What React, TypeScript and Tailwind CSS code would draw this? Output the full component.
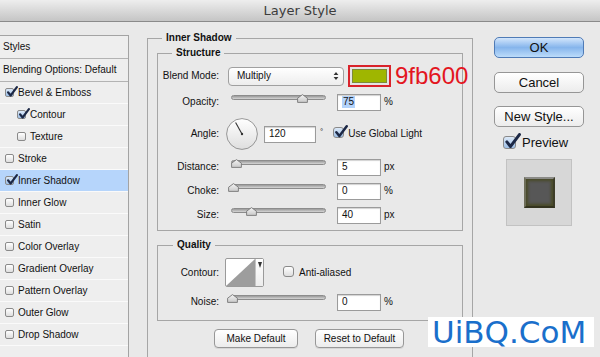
import React from "react";

type CheckSize = "sm" | "md" | "lg";

const boxSize: Record<CheckSize, string> = {
  sm: "w-[9px] h-[9px] rounded-[2px]",
  md: "w-[11px] h-[11px] rounded-[3px]",
  lg: "w-[13px] h-[13px] rounded-[3px]",
};
const markSize: Record<CheckSize, string> = {
  sm: "absolute left-[0px] -top-[3px] w-[12px] h-[12px]",
  md: "absolute left-[0px] -top-[3px] w-[14px] h-[14px]",
  lg: "absolute left-[0px] -top-[4px] w-[17px] h-[17px]",
};

function Check({ checked = false, size = "sm" }: { checked?: boolean; size?: CheckSize }) {
  return (
    <span
      className={`relative inline-block shrink-0 border border-[#8a8a8a] ${boxSize[size]} ${
        checked
          ? "bg-linear-to-b from-[#dce9f8] to-[#9dbfe6]"
          : "bg-linear-to-b from-white to-[#dedede]"
      }`}
    >
      {checked && (
        <svg className={markSize[size]} viewBox="0 0 13 13">
          <path
            d="M2.2 6.8 L5 10.3 L11.8 1.2"
            fill="none"
            stroke="#1c2846"
            strokeWidth="2.3"
            strokeLinecap="round"
            strokeLinejoin="round"
          />
        </svg>
      )}
    </span>
  );
}

function StyleRow({
  label,
  checked = false,
  sub = false,
  selected = false,
}: {
  label: string;
  checked?: boolean;
  sub?: boolean;
  selected?: boolean;
}) {
  return (
    <div
      className={`h-[22px] flex items-center border-b border-[#fafafa] ${sub ? "pl-[17px]" : "pl-[5px]"} ${
        selected ? "bg-[#b6d5fb]" : ""
      }`}
    >
      <Check checked={checked} />
      <span className="ml-[4px]">{label}</span>
    </div>
  );
}

function Slider({ thumb }: { thumb: number }) {
  return (
    <div className="relative w-[95px] h-[20px] shrink-0">
      <div className="absolute left-0 right-0 top-[3px] h-[5px] rounded-full border border-[#8c8c8c] bg-linear-to-b from-[#9a9a9a] to-[#d6d6d6]" />
      <svg className="absolute top-[2px] w-[11px] h-[9px]" style={{ left: thumb }} viewBox="0 0 11 9">
        <defs>
          <linearGradient id="thumbg" x1="0" y1="0" x2="0" y2="1">
            <stop offset="0" stopColor="#f4f4f4" />
            <stop offset="1" stopColor="#c9c9c9" />
          </linearGradient>
        </defs>
        <path d="M5.5 0.6 L10.4 4.2 L10.4 8.4 L0.6 8.4 L0.6 4.2 Z" fill="url(#thumbg)" stroke="#777" strokeWidth="0.9" />
      </svg>
    </div>
  );
}

function Field({ value, wide = false, highlight = false }: { value: string; wide?: boolean; highlight?: boolean }) {
  return (
    <div
      className={`h-[17px] ${wide ? "w-[52px]" : "w-[44px]"} shrink-0 bg-white border border-[#9b9b9b] shadow-[inset_0_1px_1px_rgba(0,0,0,0.18)] flex items-center pl-[4px]`}
    >
      <span className={highlight ? "bg-[#b3d3fb] px-[1px]" : ""}>{value}</span>
    </div>
  );
}

function Label({ children }: { children: React.ReactNode }) {
  return <div className="w-[61px] shrink-0 text-right">{children}</div>;
}

function SmallButton({ children, w }: { children: React.ReactNode; w: string }) {
  return (
    <div
      className={`${w} h-[19px] rounded-[4px] border border-[#979797] bg-linear-to-b from-white to-[#ececec] shadow-[0_1px_0_rgba(0,0,0,0.08)] flex items-center justify-center`}
    >
      {children}
    </div>
  );
}

function BigButton({ children, primary = false }: { children: React.ReactNode; primary?: boolean }) {
  return (
    <div
      className={`w-[90px] h-[21px] rounded-[5px] border flex items-center justify-center text-[13px] ${
        primary
          ? "border-[#4f7bb6] bg-linear-to-b from-[#d3e6fb] via-[#86b5ec] to-[#bcdcfa]"
          : "border-[#969696] bg-linear-to-b from-white to-[#ececec]"
      }`}
    >
      {children}
    </div>
  );
}

export default function App() {
  return (
    <div className="relative w-[600px] h-[357px] overflow-hidden bg-[#e9e9e9] text-[#111] text-[10px] leading-[12px] font-['Liberation_Sans',Arial,sans-serif]">
      {/* Title bar */}
      <div className="h-[22px] border-b border-[#8a8a8a] bg-linear-to-b from-[#eeeeee] to-[#c5c5c5] flex items-center justify-center font-['DejaVu_Sans',sans-serif] text-[13px] text-[#3c3c3c]">
        Layer Style
      </div>

      <div className="flex items-start">
        {/* Left styles list */}
        <div className="mt-[13px] w-[129px] h-[330px] shrink-0 border-t border-r border-[#a3a3a3] bg-[#eeeeee]">
          <div className="h-[23px] flex items-center pl-[3px] border-b border-[#b3b3b3]">Styles</div>
          <div className="h-[23px] flex items-center pl-[3px] border-b border-[#b3b3b3]">Blending Options: Default</div>
          <StyleRow label="Bevel & Emboss" checked />
          <StyleRow label="Contour" checked sub />
          <StyleRow label="Texture" sub />
          <StyleRow label="Stroke" />
          <StyleRow label="Inner Shadow" checked selected />
          <StyleRow label="Inner Glow" />
          <StyleRow label="Satin" />
          <StyleRow label="Color Overlay" />
          <StyleRow label="Gradient Overlay" />
          <StyleRow label="Pattern Overlay" />
          <StyleRow label="Outer Glow" />
          <StyleRow label="Drop Shadow" />
        </div>

        {/* Inner Shadow group */}
        <div className="relative ml-[18px] mt-[16px] w-[326px] h-[330px] shrink-0 border border-[#a6a6a6]">
          <div className="absolute -top-[7px] left-[14px] px-[4px] bg-[#e9e9e9] font-bold">Inner Shadow</div>

          {/* Structure */}
          <div className="relative mx-[9px] mt-[14px] h-[178px] border border-[#a6a6a6] pt-[11px]">
            <div className="absolute -top-[7px] left-[14px] px-[4px] bg-[#e9e9e9] font-bold">Structure</div>

            <div className="flex items-center h-[22px]">
              <Label>Blend Mode:</Label>
              <div className="ml-[9px] w-[116px] h-[19px] shrink-0 rounded-[4px] border border-[#a0a0a0] bg-linear-to-b from-white to-[#ededed] flex items-center justify-between pl-[8px] pr-[4px]">
                <span>Multiply</span>
                <svg className="w-[6px] h-[10px]" viewBox="0 0 6 10">
                  <path d="M0.6 4 L3 1 L5.4 4 Z M0.6 6 L3 9 L5.4 6 Z" fill="#333" />
                </svg>
              </div>
              <div className="ml-[4px] w-[43px] h-[22px] shrink-0 border-2 border-[#d9232b] p-[2px] bg-[#e4e4e4]">
                <div className="w-full h-full bg-[#9fb600] border border-[#7d8a3a]" />
              </div>
              <span className="ml-[4px] text-[24px] leading-none text-[#e3161f]">9fb600</span>
            </div>

            <div className="flex items-center h-[20px] mt-[5px]">
              <Label>Opacity:</Label>
              <div className="ml-[12px]">
                <Slider thumb={66} />
              </div>
              <div className="ml-[11px]">
                <Field value="75" highlight />
              </div>
              <span className="ml-[3px]">%</span>
            </div>

            <div className="flex items-center h-[32px] mt-[6px]">
              <Label>Angle:</Label>
              <svg className="ml-[7px] w-[32px] h-[32px] shrink-0" viewBox="0 0 32 32">
                <defs>
                  <linearGradient id="dialg" x1="0" y1="0" x2="0" y2="1">
                    <stop offset="0" stopColor="#ffffff" />
                    <stop offset="1" stopColor="#dedede" />
                  </linearGradient>
                </defs>
                <circle cx="16" cy="16" r="15.4" fill="url(#dialg)" stroke="#8c8c8c" strokeWidth="0.9" />
                <line x1="16" y1="16" x2="9.6" y2="4.6" stroke="#333" strokeWidth="1.1" />
                <circle cx="16" cy="16" r="1.2" fill="#333" />
              </svg>
              <div className="ml-[6px]">
                <Field value="120" wide />
              </div>
              <span className="ml-[4px] -mt-[4px] text-[8px]">°</span>
              <span className="ml-[10px]">
                <Check checked size="md" />
              </span>
              <span className="ml-[4px]">Use Global Light</span>
            </div>

            <div className="flex items-center h-[20px] mt-[7px]">
              <Label>Distance:</Label>
              <div className="ml-[12px]">
                <Slider thumb={0} />
              </div>
              <div className="ml-[11px]">
                <Field value="5" />
              </div>
              <span className="ml-[3px]">px</span>
            </div>

            <div className="flex items-center h-[20px] mt-[4px]">
              <Label>Choke:</Label>
              <div className="ml-[12px]">
                <Slider thumb={-3} />
              </div>
              <div className="ml-[11px]">
                <Field value="0" />
              </div>
              <span className="ml-[3px]">%</span>
            </div>

            <div className="flex items-center h-[20px] mt-[4px]">
              <Label>Size:</Label>
              <div className="ml-[12px]">
                <Slider thumb={15} />
              </div>
              <div className="ml-[11px]">
                <Field value="40" />
              </div>
              <span className="ml-[3px]">px</span>
            </div>
          </div>

          {/* Quality */}
          <div className="relative mx-[9px] mt-[14px] h-[76px] border border-[#a6a6a6] pt-[12px]">
            <div className="absolute -top-[7px] left-[15px] px-[4px] bg-[#e9e9e9] font-bold">Quality</div>

            <div className="flex items-center h-[29px]">
              <Label>Contour:</Label>
              <div className="ml-[6px] w-[39px] h-[29px] shrink-0 flex border border-[#9a9a9a] bg-white rounded-[2px]">
                <svg className="w-[29px] h-[27px]" viewBox="0 0 29 27">
                  <path d="M0 27 L29 0 L29 27 Z" fill="#9d9d9d" />
                </svg>
                <div className="flex-1 border-l border-[#c4c4c4] bg-linear-to-b from-white to-[#ececec] flex justify-center pt-[3px]">
                  <svg className="w-[4px] h-[6px]" viewBox="0 0 4 6">
                    <path d="M0 0 L4 0 L2 6 Z" fill="#333" />
                  </svg>
                </div>
              </div>
              <span className="ml-[19px]">
                <Check size="md" />
              </span>
              <span className="ml-[5px]">Anti-aliased</span>
            </div>

            <div className="flex items-center h-[20px] mt-[5px]">
              <Label>Noise:</Label>
              <div className="ml-[12px]">
                <Slider thumb={-4} />
              </div>
              <div className="ml-[11px]">
                <Field value="0" />
              </div>
              <span className="ml-[3px]">%</span>
            </div>
          </div>

          <div className="flex mt-[8px] ml-[66px]">
            <SmallButton w="w-[84px]">Make Default</SmallButton>
            <div className="ml-[17px]">
              <SmallButton w="w-[89px]">Reset to Default</SmallButton>
            </div>
          </div>
        </div>

        {/* Right column */}
        <div className="ml-[21px] mt-[15px] w-[90px] shrink-0 flex flex-col">
          <BigButton primary>OK</BigButton>
          <div className="mt-[14px]">
            <BigButton>Cancel</BigButton>
          </div>
          <div className="mt-[13px]">
            <BigButton>New Style...</BigButton>
          </div>
          <div className="mt-[9px] ml-[9px] flex items-center h-[13px]">
            <Check checked size="lg" />
            <span className="ml-[6px] text-[13px]">Preview</span>
          </div>
          <div className="mt-[10px] ml-[12px] w-[66px] h-[67px] bg-[#d7d7d7] border border-[#c2c2c2] flex items-center justify-center">
            <div className="w-[31px] h-[31px] bg-[#575757] border-2 border-t-[#8a8a86] border-l-[#6e6e5a] border-r-[#3d3d28] border-b-[#33331f] shadow-[inset_0_0_3px_2px_rgba(70,72,30,0.85)]" />
          </div>
        </div>
      </div>

      {/* Watermark */}
      <div className="absolute left-[428px] top-[317px] w-[166px] h-[30px] bg-white pl-[4px] font-['DejaVu_Sans',sans-serif] text-[31px] leading-[30px] text-[#1a6fcb]">
        UiBQ.CoM
      </div>
    </div>
  );
}
